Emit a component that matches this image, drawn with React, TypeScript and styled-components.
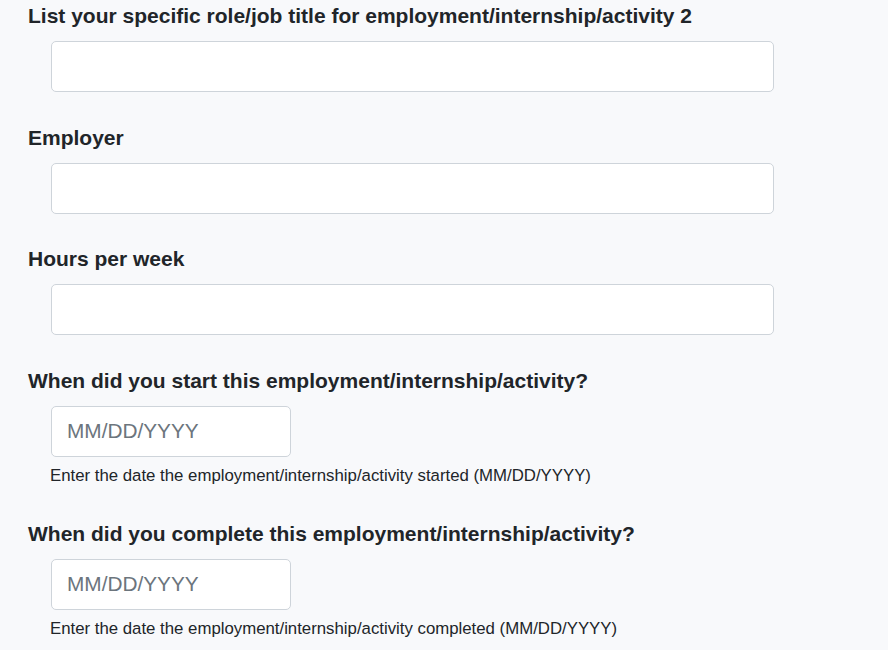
import React, { FC } from "react";
import styled, { createGlobalStyle } from "styled-components";

const GlobalStyle = createGlobalStyle`
  body {
    margin: 0;
    background-color: #f8f9fb;
    font-family: "Liberation Sans", Arial, sans-serif;
    color: #212529;
  }
`;

const Form = styled.div`
  display: flex;
  flex-direction: column;
  gap: 33.5px;
  padding: 4px 0 0 28px;
`;

const Field = styled.div`
  display: flex;
  flex-direction: column;
  align-items: flex-start;
`;

const Label = styled.label`
  font-size: 21px;
  line-height: 24px;
  font-weight: 700;
  margin-bottom: 13px;
`;

const Input = styled.input<{ $narrow?: boolean }>`
  box-sizing: border-box;
  margin-left: 23px;
  width: ${({ $narrow }) => ($narrow ? "240px" : "723px")};
  height: 51px;
  padding: 0 15px;
  border: 1px solid #ced4da;
  border-radius: 5px;
  background-color: #ffffff;
  font-family: inherit;
  font-size: 20.8px;
  color: #212529;

  &::placeholder {
    color: #6c757d;
  }
`;

const HelpText = styled.div`
  margin: 9px 0 3.5px 22px;
  font-size: 16.8px;
  line-height: 19px;
`;

interface FieldProps {
  label: string;
  date?: boolean;
  help?: string;
}

const FormField: FC<FieldProps> = ({ label, date, help }) => (
  <Field>
    <Label>{label}</Label>
    <Input
      type="text"
      $narrow={date}
      placeholder={date ? "MM/DD/YYYY" : undefined}
    />
    {help && <HelpText>{help}</HelpText>}
  </Field>
);

const App: FC = () => (
  <>
    <GlobalStyle />
    <Form>
      <FormField label="List your specific role/job title for employment/internship/activity 2" />
      <FormField label="Employer" />
      <FormField label="Hours per week" />
      <FormField
        label="When did you start this employment/internship/activity?"
        date
        help="Enter the date the employment/internship/activity started (MM/DD/YYYY)"
      />
      <FormField
        label="When did you complete this employment/internship/activity?"
        date
        help="Enter the date the employment/internship/activity completed (MM/DD/YYYY)"
      />
    </Form>
  </>
);

export default App;
